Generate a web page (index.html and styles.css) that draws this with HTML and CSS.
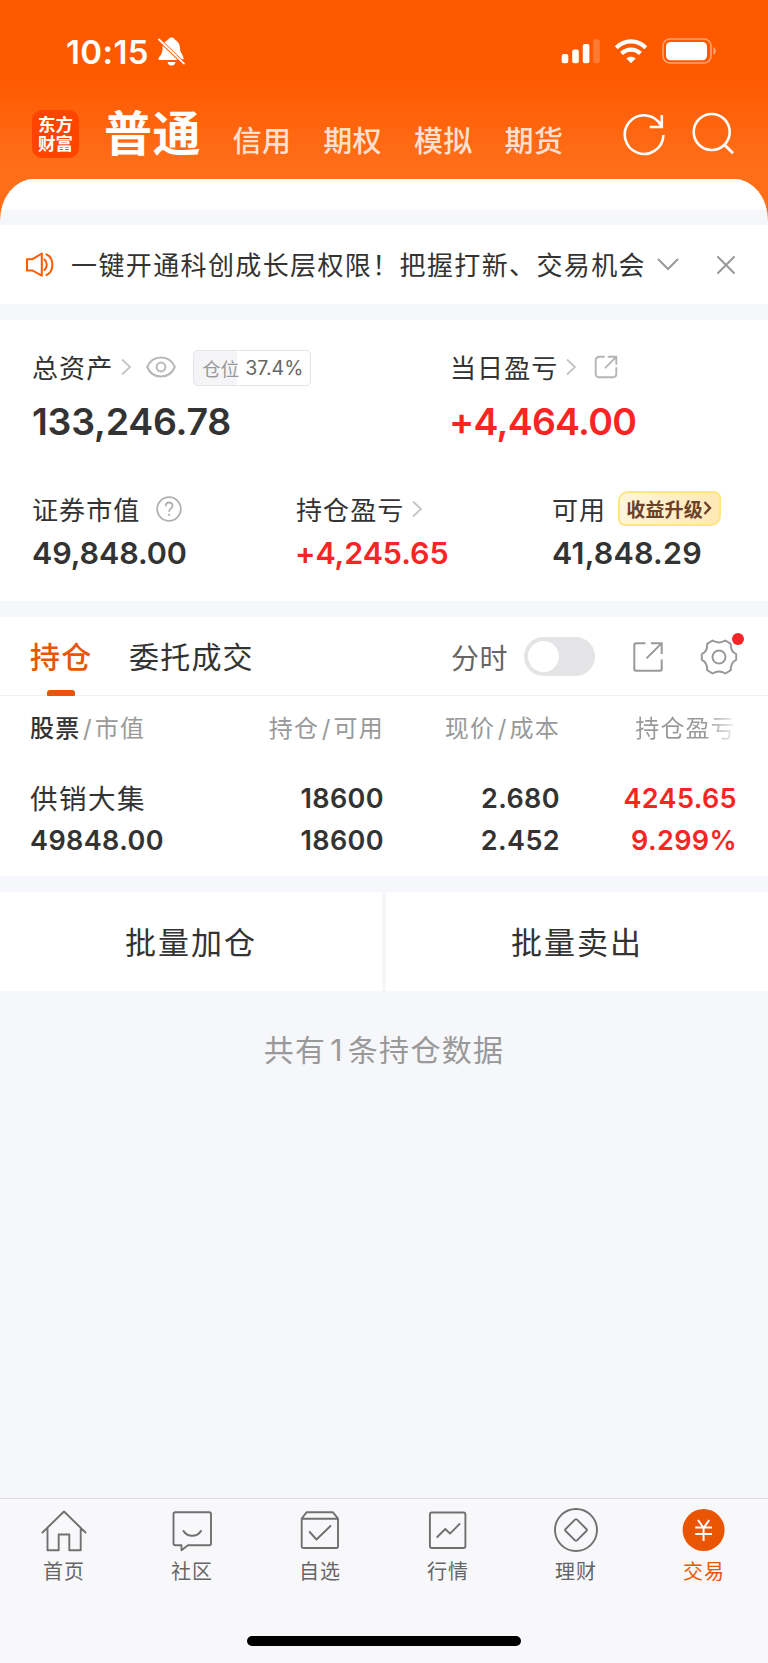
FILE: index.html
```html
<!DOCTYPE html>
<html lang="zh-CN">
<head>
<meta charset="utf-8">
<title>交易</title>
<link rel="stylesheet" href="styles.css">
</head>
<body>
<div class="app">
  <header class="header">
    <div class="status">
      <span class="time">10:15</span>
      <svg class="bell" width="28" height="30" viewBox="0 0 28 30">
        <path fill="#fff" d="M6.5 5.5C8.3 3.2 10.2 2.9 10.8 1.7C11.8 0 15.2 0 16.2 1.7C16.8 2.8 21.8 4.5 22 11.2C22.1 16 25.7 18 25.7 22.2H23.8L6.5 5.5ZM4.5 8.5L19.5 23H1.5C.4 23 .2 22 .7 21.1C2 18.8 4.5 16.8 4.5 11.5ZM9.5 25H17.5C17.1 27.5 15.5 28.6 13.5 28.6S9.9 27.5 9.5 25Z"/>
        <path d="M1 2.5L26 26.6" stroke="#fff" stroke-width="1.9" stroke-linecap="round"/>
      </svg>
      <svg class="signals" width="158" height="28" viewBox="0 0 158 28">
        <g fill="#fff">
          <rect x="1.7" y="16" width="6.6" height="9.3" rx="2"/>
          <rect x="12.2" y="11.5" width="6.6" height="13.8" rx="2"/>
          <rect x="22.8" y="6" width="6.6" height="19.3" rx="2"/>
          <rect x="33.2" y="1.2" width="6.6" height="24.1" rx="2" opacity=".2"/>
          <rect x="106" y="4" width="41" height="18.3" rx="4.5"/>
          <path d="M153.3 9.3C156.7 10.5 156.7 15.7 153.3 16.9Z" opacity=".45"/>
          <path d="M71 25.2L66.4 20.4C69 18.2 73 18.2 75.6 20.4Z"/>
        </g>
        <rect x="103" y="1" width="48" height="24" rx="7" fill="none" stroke="#fff" stroke-width="1.6" opacity=".45"/>
        <g fill="none" stroke="#fff" stroke-width="4.2">
          <path d="M56.2 9.7C64.5 1.3 77.5 1.3 85.8 9.7"/>
          <path d="M61.5 15.6C66.8 10.3 75.2 10.3 80.5 15.6"/>
        </g>
      </svg>
    </div>
    <nav class="nav">
      <div class="logo"><span>东方</span><span>财富</span></div>
      <a class="nav-current">普通</a>
      <a class="nav-link">信用</a>
      <a class="nav-link">期权</a>
      <a class="nav-link">模拟</a>
      <a class="nav-link">期货</a>
      <svg class="nav-icons" width="114" height="46" viewBox="0 0 114 46" fill="none" stroke="#fff" stroke-width="2.6">
        <path d="M40.4 24A19.3 19.3 0 1 1 38 14.3M38.8 4V16H26.7"/>
        <circle cx="88.7" cy="21" r="18"/>
        <path d="M101.5 33.8L110 42.3" stroke-width="3"/>
      </svg>
    </nav>
  </header>

  <main class="main">
    <div class="panel-top"></div>
    <section class="notice">
      <svg width="30" height="28" viewBox="0 0 30 28" fill="none" stroke="#ff5a00" stroke-width="2" stroke-linejoin="round" stroke-linecap="round">
        <path d="M2 8.2H7.5L16.8 2.5V24.7L7.5 19.5H2ZM19.500 8.500C22.500 11 22.500 16.500 19.500 19M21.500 3.300C29.300 7 29.300 20.500 21.500 24"/>
      </svg>
      <p class="notice-text">一键开通科创成长层权限！把握打新、交易机会</p>
      <svg class="notice-more" width="22" height="14" viewBox="0 0 22 14" fill="none" stroke="#999" stroke-width="2" stroke-linecap="round"><path d="M1.500 1.500L11 11L20.500 1.500"/></svg>
      <svg class="notice-close" width="20" height="20" viewBox="0 0 20 20" fill="none" stroke="#999" stroke-width="2" stroke-linecap="round"><path d="M2 2L18 18M18 2L2 18"/></svg>
    </section>

    <section class="assets">
      <div class="assets-main">
        <div class="asset">
          <div class="asset-label"><span>总资产</span>
            <svg class="chev" width="12" height="18" viewBox="0 0 12 18"><path d="M2 1.500L10 9L2 16.500"/></svg>
            <svg class="eye" width="30" height="22" viewBox="0 0 30 22" fill="none" stroke="#b7b7b7" stroke-width="2"><path d="M1.200 11C6.500-1.700 23.500-1.700 28.800 11C23.500 23.700 6.500 23.700 1.200 11Z"/><circle cx="15" cy="11" r="4.400"/></svg>
            <span class="position"><em>仓位</em><b>37.4%</b></span>
          </div>
          <div class="asset-total">133,246.78</div>
        </div>
        <div class="asset">
          <div class="asset-label"><span>当日盈亏</span>
            <svg class="chev" width="12" height="18" viewBox="0 0 12 18"><path d="M2 1.500L10 9L2 16.500"/></svg>
            <svg class="share" width="24" height="24" viewBox="0 0 24 24" fill="none" stroke="#b5b5b5" stroke-width="1.900" stroke-linecap="round"><path d="M10 1.800H5.500Q1.700 1.800 1.700 5.500V18.500Q1.700 22.300 5.500 22.300H18.500Q22.300 22.300 22.300 18.500V13M14.500 1.800H22.300V9M22 2.200L11.500 12.700"/></svg>
          </div>
          <div class="asset-total asset-day up">+4,464.00</div>
        </div>
      </div>
      <div class="assets-sub">
        <div class="asset">
          <div class="asset-label"><span>证券市值</span>
            <svg class="help" width="26" height="26" viewBox="0 0 26 26" fill="none" stroke="#b0b0b0" stroke-width="1.800"><circle cx="13" cy="13" r="11.800"/><path d="M9.700 10.200C9.700 5.300 16.500 5.400 16.500 9.700C16.500 12.500 13.100 12.300 13.100 15.800M13.100 17.700V19.800"/></svg>
          </div>
          <div class="asset-value">49,848.00</div>
        </div>
        <div class="asset">
          <div class="asset-label"><span>持仓盈亏</span>
            <svg class="chev" width="12" height="18" viewBox="0 0 12 18"><path d="M2 1.500L10 9L2 16.500"/></svg>
          </div>
          <div class="asset-value asset-hold up">+4,245.65</div>
        </div>
        <div class="asset">
          <div class="asset-label"><span>可用</span>
            <span class="badge">收益升级<svg width="9" height="16" viewBox="0 0 9 16" fill="none" stroke="#6b4129" stroke-width="2.400"><path d="M1.500 2L7 8L1.500 14"/></svg></span>
          </div>
          <div class="asset-value asset-free">41,848.29</div>
        </div>
      </div>
    </section>

    <section class="holdings">
      <div class="tabs">
        <a class="tab tab-on">持仓</a>
        <a class="tab">委托成交</a>
        <span class="minute">分时</span>
        <span class="toggle"></span>
        <svg class="export" width="32" height="32" viewBox="0 0 32 32" fill="none" stroke="#999" stroke-width="2"><path d="M13.500 2.200H4Q2.300 2.200 2.300 4V28Q2.300 29.700 4 29.700H28Q29.700 29.700 29.700 28V18.500M19 2.200H29.700V13M29.300 2.600L14.500 17.400"/></svg>
        <span class="settings">
          <svg width="38" height="38" viewBox="0 0 38 38" fill="none" stroke="#999" stroke-width="2" stroke-linejoin="round"><path d="M12.600 2.500C16.500 4.800 21.500 4.800 25.400 2.500L30.800 5.800C30.500 11.300 32.200 14.300 36.200 16.200V21.800C32.200 23.700 30.500 26.700 30.800 32.200L25.400 35.500C21.500 33.200 16.500 33.200 12.600 35.500L7.200 32.200C7.500 26.700 5.800 23.700 1.800 21.800V16.200C5.800 14.300 7.500 11.300 7.200 5.800Z"/><circle cx="19" cy="19" r="6.500"/></svg>
          <i class="dot"></i>
        </span>
      </div>
      <div class="grid grid-head">
        <span><b>股票</b><i>/</i>市值</span><span>持仓<i>/</i>可用</span><span>现价<i>/</i>成本</span><span class="fade">持仓盈亏</span>
      </div>
      <div class="grid row">
        <span class="stock">供销大集</span><span>18600</span><span>2.680</span><span class="up">4245.65</span>
        <span>49848.00</span><span>18600</span><span>2.452</span><span class="up">9.299%</span>
      </div>
    </section>

    <div class="actions"><button>批量加仓</button><button>批量卖出</button></div>
    <p class="summary">共有<span>1</span>条持仓数据</p>
  </main>

  <footer class="tabbar">
    <div class="tabbar-items">
      <a><svg width="46" height="46" viewBox="0 0 46 46"><path d="M1.500 24.500L23 3.500L44.500 24.500M6.500 20V42.200H17.700V26.500H28.300V42.200H39.700V20"/></svg>首页</a>
      <a><svg width="46" height="46" viewBox="0 0 46 46"><path d="M6.300 4.300H40.200Q42 4.300 42 6V35.500Q42 37.200 40.200 37.200H19L12.500 42.200V37.200H6.300Q4.500 37.200 4.500 35.500V6Q4.500 4.300 6.300 4.300Z"/><path d="M14.500 23C18.500 29.300 28 29.300 32 23" stroke-width="2.100"/></svg>社区</a>
      <a><svg width="46" height="46" viewBox="0 0 46 46"><path d="M4.700 10.500L9.500 4.300H36L41 10.500V38.200Q41 40 39.200 40H6.500Q4.700 40 4.700 38.200ZM4.700 10.700H41M12.700 24L19.500 31.500L33.500 18"/></svg>自选</a>
      <a><svg width="46" height="46" viewBox="0 0 46 46"><rect x="4.900" y="4.500" width="35.500" height="35.500" rx="2"/><path d="M12.300 29L20.300 21L25 25.700L34.500 16"/></svg>行情</a>
      <a><svg width="46" height="46" viewBox="0 0 46 46"><circle cx="23" cy="22" r="21"/><path d="M22 11.600Q23 10.700 24 11.600L33.400 21Q34.300 22 33.400 23L24 32.400Q23 33.300 22 32.400L12.600 23Q11.700 22 12.600 21Z"/></svg>理财</a>
      <a class="on"><svg width="46" height="46" viewBox="0 0 46 46"><circle cx="22.600" cy="22" r="21" fill="#ea5504" stroke="none"/><path class="yuan" d="M17 12L22.600 20L28.200 12M22.600 20V33M14.200 19.500H31M14.200 25.900H31"/></svg>交易</a>
    </div>
    <div class="home-indicator"></div>
  </footer>
</div>
</body>
</html>
```
FILE: styles.css
```css
* { box-sizing: border-box; }
body { margin: 0; }
p { margin: 0; }
i, em { font-style: normal; }
svg { display: block; flex: none; }

.app {
  display: flex;
  flex-direction: column;
  width: 768px;
  height: 1663px;
  overflow: hidden;
  font-family: Inter, "Noto Sans CJK SC", sans-serif;
  color: #333;
  white-space: nowrap;
  background: linear-gradient(#ff5900 0, #ff5900 75px, #ff6e19 165px, #ff6e19 225px);
}

.header { height: 179px; flex: none; }
.status { display: flex; align-items: flex-start; height: 89px; padding: 37px 0 0 66px; }
.time { width: 92px; font-size: 33px; font-weight: 600; line-height: 30px; letter-spacing: .4px; color: #fff; }
.signals { margin: 1px 0 0 374px; }

.nav { display: flex; align-items: flex-start; padding: 21px 0 0 32px; color: #fff; }
.logo {
  display: flex; flex-direction: column; align-items: center;
  width: 47px; height: 48px; padding-top: 5px; margin-right: 25px;
  border-radius: 10px; background: #ff4400;
  font-size: 17.5px; font-weight: 700; line-height: 19px;
}
.nav-current { width: 128.5px; padding-top: 1px; font-size: 48px; font-weight: 700; line-height: 46px; letter-spacing: .5px; }
.nav-link { width: 90.7px; padding-top: 16px; font-size: 29px; font-weight: 500; line-height: 31px; color: #ffe0d0; letter-spacing: .4px; }
.nav-icons { margin: 1px 0 0 28px; }

.main { flex: 1; overflow: hidden; background: #f6f7fa; border-radius: 34px 34px 0 0 / 42px 42px 0 0; }
.panel-top { height: 31px; margin-bottom: 15px; background: #fff; }

.notice { display: flex; align-items: center; height: 79px; padding-left: 25px; background: #fff; }
.notice-text { width: 576px; margin-left: 16px; padding-top: 2px; font-size: 26px; letter-spacing: 1.38px; line-height: 40px; }
.notice-more { margin-left: 10px; }
.notice-close { margin-left: 37px; }

.assets { height: 281px; margin-top: 16px; padding: 27px 0 0 32px; background: #fff; }
.assets-main { display: grid; grid-template-columns: 418px 1fr; height: 142px; }
.assets-sub { display: grid; grid-template-columns: 264px 256px 1fr; }
.asset-label { display: flex; align-items: center; height: 39px; font-size: 26px; letter-spacing: 1.1px; }
.chev { margin-left: 7px; fill: none; stroke: #c4c4c4; stroke-width: 1.8; }
.eye { margin-left: 14px; }
.share { margin-left: 17px; }
.help { margin-left: 16px; }
.position {
  display: flex; align-items: center; gap: 6px;
  width: 118px; height: 36px; margin: 3px 0 0 17px; padding-left: 8px;
  border: 1px solid #e4e4e8; border-radius: 5px;
  background: linear-gradient(90deg, #f5f5f8 43px, #fff 43px);
  font-size: 18.5px; letter-spacing: 0;
}
.position em { color: #999; }
.position b { font-size: 19.5px; font-weight: 400; color: #666; }
.asset-total { margin-top: 13px; font-size: 37.5px; font-weight: 600; line-height: 45px; letter-spacing: -.25px; }
.asset-day { margin-left: -1px; letter-spacing: -.75px; }
.asset-value { margin-top: 5px; font-size: 30.5px; font-weight: 600; line-height: 40px; letter-spacing: -.1px; }
.asset-hold { margin-left: -1px; }
.asset-free { letter-spacing: .2px; }
.up { color: #f92525; }
.badge {
  display: flex; align-items: center; gap: 0;
  width: 103px; height: 35px; margin: -1px 0 0 12px; padding-left: 6px;
  border: 2px solid #ffe683; border-radius: 10px 7px 10px 7px;
  background: linear-gradient(90deg, #fff5da, #ffe9b4);
  font-size: 19px; font-weight: 700; letter-spacing: .2px; color: #6b4129;
}

.holdings { height: 259px; margin-top: 16px; background: #fff; }
.tabs { display: flex; align-items: center; height: 79px; padding: 1px 0 0 30px; border-bottom: 1px solid #f0f0f3; }
.tab { position: relative; width: 99px; font-size: 30px; line-height: 78px; letter-spacing: 1.2px; }
.tab + .tab { width: 322px; }
.tab-on { font-weight: 500; color: #ea5504; }
.tab-on::after { content: ""; position: absolute; left: 17px; bottom: 0; width: 28px; height: 6px; border-radius: 3px 3px 1px 1px; background: #ea5504; }
.minute { width: 73px; font-size: 28px; letter-spacing: .5px; color: #666; }
.toggle { width: 71px; height: 39px; padding: 4px; border-radius: 20px; background: #e4e4e6; }
.toggle::before { content: ""; display: block; width: 31px; height: 31px; border-radius: 50%; background: #fff; }
.export { margin-left: 36.5px; }
.settings { position: relative; margin-left: 36px; }
.dot { position: absolute; left: 32.5px; top: -5px; width: 12px; height: 12px; border-radius: 50%; background: #f92525; }

.grid { display: grid; grid-template-columns: 160px 194px 176px 177px; padding-left: 30px; text-align: right; }
.grid > :nth-child(4n+1) { text-align: left; }
.grid-head { height: 82px; font-size: 24px; line-height: 66px; letter-spacing: 1.2px; color: #999; }
.grid-head b { font-weight: 500; color: #333; }
.grid-head i { margin: 0 2px 0 2.5px; }
.grid-head .fade { padding-right: 1px; background: linear-gradient(90deg, #999 82%, #fff 102%); background-clip: text; color: transparent; }
.row { font-size: 27px; font-weight: 600; line-height: 42px; letter-spacing: .4px; }
.row .stock { font-size: 27.5px; font-weight: 400; letter-spacing: 1.5px; line-height: 42px; }

.actions { display: grid; grid-template-columns: 1fr 1fr; gap: 4px; height: 99px; margin-top: 16px; }
.actions button { border: 0; padding: 2px 0 0; background: #fff; font: 31px/97px Inter, "Noto Sans CJK SC", sans-serif; letter-spacing: 2px; color: #333; }
.summary { margin-top: 39px; font-size: 30px; line-height: 40px; letter-spacing: 1.3px; text-align: center; color: #999; }
.summary span { margin: 0 4px; }

.tabbar { flex: none; height: 165px; border-top: 1px solid #dedee0; background: #f8f8fb; }
.tabbar-items { display: grid; grid-template-columns: repeat(6, 1fr); height: 137px; padding-top: 9px; }
.tabbar a { display: flex; flex-direction: column; align-items: center; gap: 3px; font-size: 20px; line-height: 30px; letter-spacing: 1px; color: #666; }
.tabbar svg { fill: none; stroke: #707070; stroke-width: 1.9; stroke-linejoin: round; stroke-linecap: round; }
.tabbar .yuan { stroke: #fff; stroke-width: 2; stroke-linecap: butt; }
.tabbar .on { color: #ea5504; }
.home-indicator { width: 274px; height: 10px; margin: 0 auto; border-radius: 5px; background: #000; }
```
